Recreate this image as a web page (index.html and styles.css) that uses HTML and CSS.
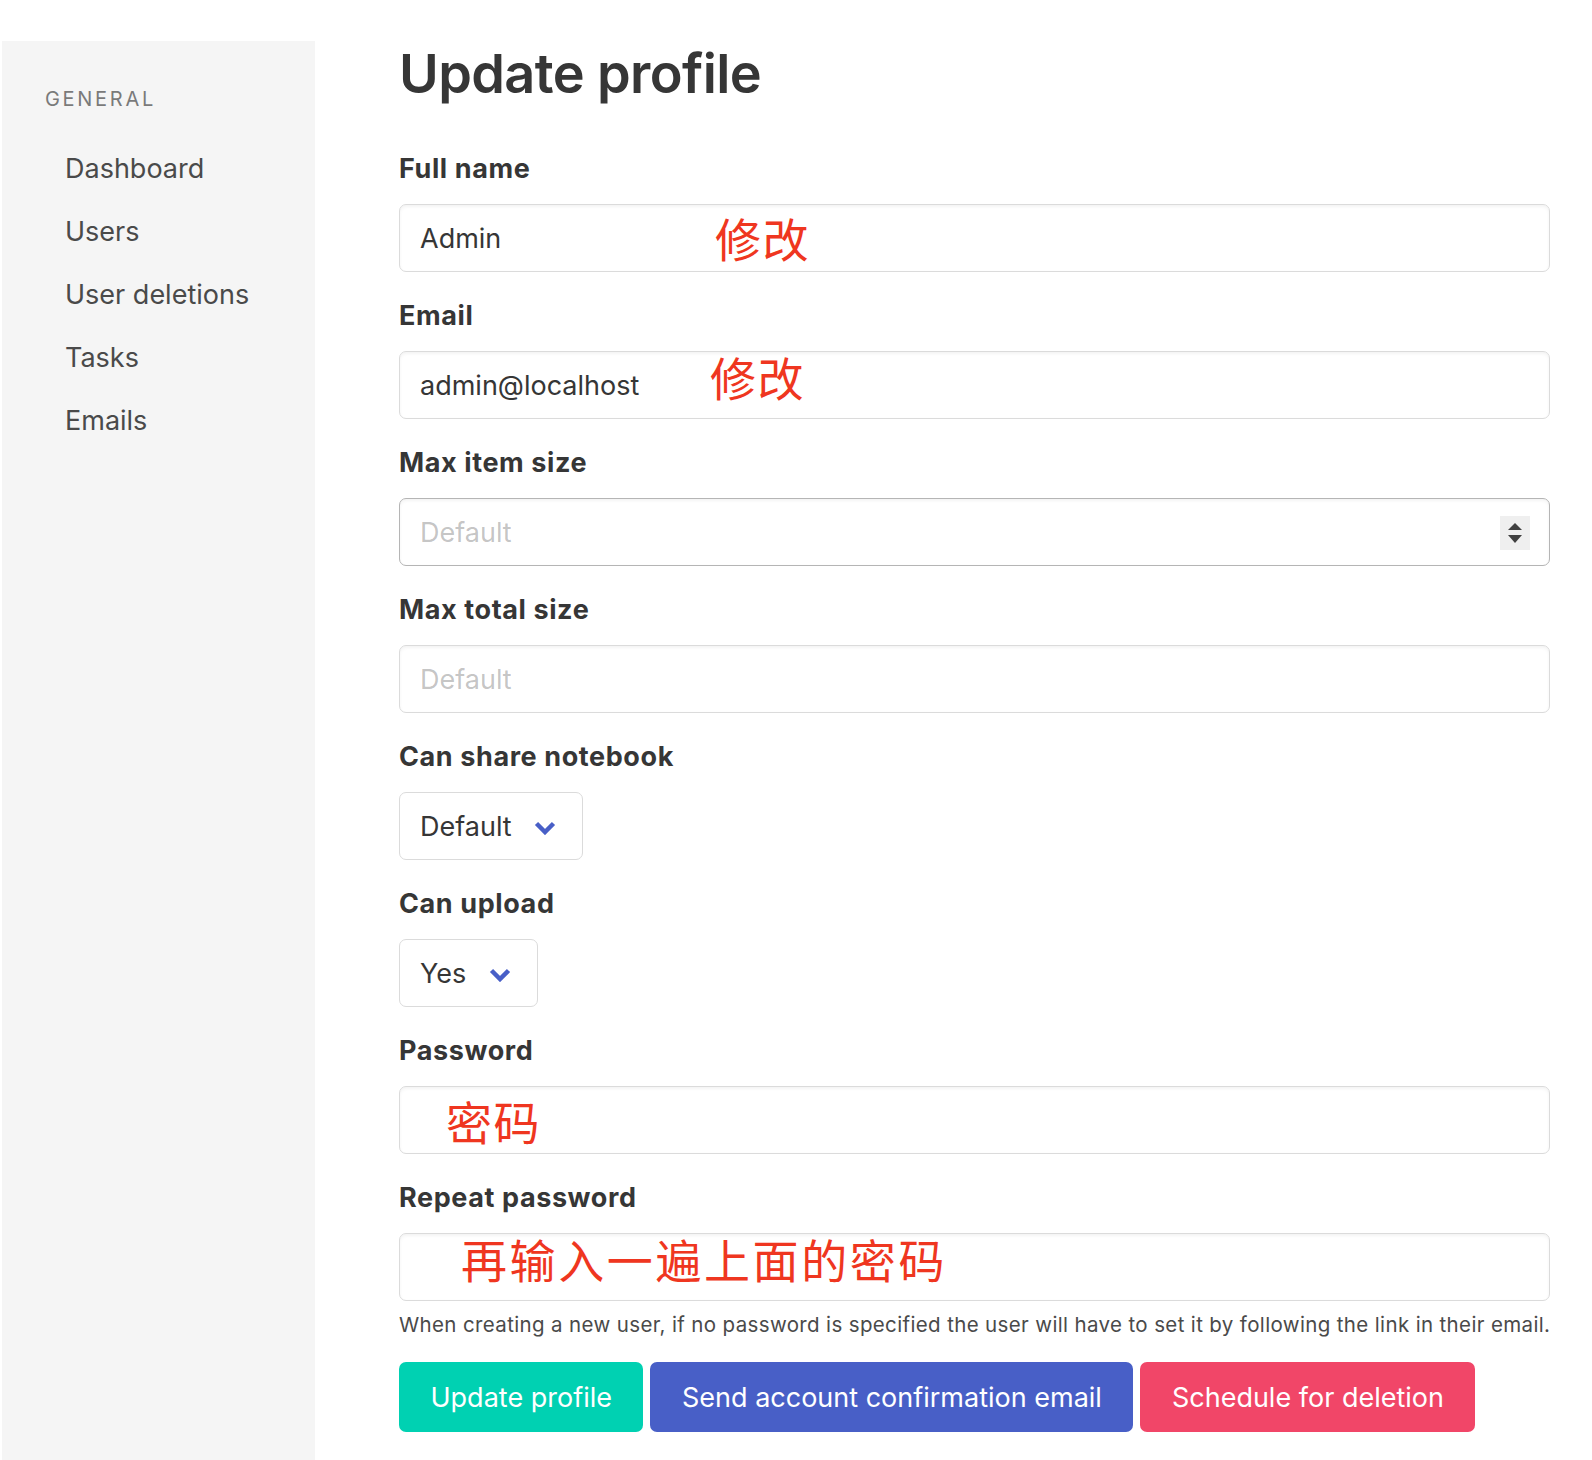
FILE: index.html
```html
<!DOCTYPE html>
<html lang="en">
<head>
<meta charset="utf-8">
<title>Update profile</title>
<link rel="stylesheet" href="styles.css">
</head>
<body>
<div class="page">
  <aside class="sidebar">
    <p class="menu-label">General</p>
    <ul class="menu-list">
      <li><a href="#">Dashboard</a></li>
      <li><a href="#">Users</a></li>
      <li><a href="#">User deletions</a></li>
      <li><a href="#">Tasks</a></li>
      <li><a href="#">Emails</a></li>
    </ul>
  </aside>
  <main class="content">
    <h1 class="title">Update profile</h1>
    <form class="form">
      <div class="field">
        <label class="label">Full name</label>
        <div class="control">
          <input class="input" type="text" value="Admin">
          <span class="note note-name">修改</span>
        </div>
      </div>
      <div class="field">
        <label class="label">Email</label>
        <div class="control">
          <input class="input" type="email" value="admin@localhost">
          <span class="note note-email">修改</span>
        </div>
      </div>
      <div class="field">
        <label class="label">Max item size</label>
        <div class="control">
          <input class="input input-hover" type="number" placeholder="Default">
          <span class="spinner"><span class="tri tri-up"></span><span class="tri tri-down"></span></span>
        </div>
      </div>
      <div class="field">
        <label class="label">Max total size</label>
        <div class="control">
          <input class="input" type="number" placeholder="Default">
        </div>
      </div>
      <div class="field">
        <label class="label">Can share notebook</label>
        <div class="control">
          <div class="select select-share">
            <select><option>Default</option></select>
            <svg class="chevron" width="22" height="14" viewBox="0 0 22 14"><polyline points="2.5,2.5 11,11 19.5,2.5" fill="none" stroke="#485fc7" stroke-width="4.5"/></svg>
          </div>
        </div>
      </div>
      <div class="field">
        <label class="label">Can upload</label>
        <div class="control">
          <div class="select select-upload">
            <select><option>Yes</option></select>
            <svg class="chevron" width="22" height="14" viewBox="0 0 22 14"><polyline points="2.5,2.5 11,11 19.5,2.5" fill="none" stroke="#485fc7" stroke-width="4.5"/></svg>
          </div>
        </div>
      </div>
      <div class="field">
        <label class="label">Password</label>
        <div class="control">
          <input class="input" type="password">
          <span class="note note-pass">密码</span>
        </div>
      </div>
      <div class="field field-last">
        <label class="label">Repeat password</label>
        <div class="control">
          <input class="input" type="password">
          <span class="note note-repeat">再输入一遍上面的密码</span>
        </div>
        <p class="help">When creating a new user, if no password is specified the user will have to set it by following the link in their email.</p>
      </div>
      <div class="buttons">
        <button type="button" class="button is-primary">Update profile</button>
        <button type="button" class="button is-link">Send account confirmation email</button>
        <button type="button" class="button is-danger">Schedule for deletion</button>
      </div>
    </form>
  </main>
</div>
</body>
</html>
```
FILE: styles.css
```css
html, body {
  margin: 0;
  padding: 0;
  background: #ffffff;
}
body {
  font-family: Inter, "Noto Sans", "Liberation Sans", sans-serif;
  color: #4a4a4a;
}
.page {
  display: flex;
  align-items: stretch;
  padding: 41px 0 0 2px;
  min-height: 1460px;
  box-sizing: border-box;
}
.sidebar {
  width: 313px;
  flex: 0 0 313px;
  background: #f5f5f5;
  padding: 43px 0 0 43px;
  box-sizing: border-box;
}
.menu-label {
  margin: 0 0 23px 0;
  font-size: 20px;
  line-height: 30px;
  letter-spacing: 2.7px;
  text-transform: uppercase;
  color: #7a7a7a;
}
.menu-list {
  list-style: none;
  margin: 0;
  padding: 0;
}
.menu-list a {
  display: block;
  padding: 15px 20px;
  font-size: 27px;
  line-height: 33px;
  color: #4a4a4a;
  text-decoration: none;
}
.content {
  flex: 1;
  padding: 3px 43px 0 84px;
  box-sizing: border-box;
}
.title {
  margin: 0 0 44.5px 0;
  font-size: 54px;
  line-height: 60px;
  font-weight: 600;
  letter-spacing: -0.6px;
  color: #363636;
}
.form {
  margin: 0;
}
.field {
  margin-bottom: 23.5px;
}
.label {
  display: block;
  margin-bottom: 15.5px;
  font-size: 27px;
  line-height: 40px;
  font-weight: 700;
  letter-spacing: 0.6px;
  color: #363636;
}
.control {
  position: relative;
}
.input {
  display: block;
  width: 100%;
  height: 68px;
  box-sizing: border-box;
  margin: 0;
  padding: 0 20px;
  border: 1px solid #dbdbdb;
  border-radius: 7px;
  box-shadow: inset 0 1.7px 3.4px rgba(10, 10, 10, 0.05);
  background: #ffffff;
  font-family: inherit;
  font-size: 27px;
  color: #363636;
  outline: none;
  -moz-appearance: textfield;
}
.input::placeholder {
  color: rgba(54, 54, 54, 0.3);
}
.input::-webkit-inner-spin-button,
.input::-webkit-outer-spin-button {
  -webkit-appearance: none;
  margin: 0;
}
.input-hover {
  border-color: #b5b5b5;
}
.note {
  position: absolute;
  font-family: "Noto Sans CJK SC", sans-serif;
  font-size: 46px;
  line-height: 46px;
  color: #ef3620;
  letter-spacing: 1.5px;
  white-space: nowrap;
  pointer-events: none;
}
.note-name { left: 316px; top: 9.5px; }
.note-email { left: 311px; top: 1.5px; }
.note-pass { left: 47px; top: 11px; }
.note-repeat { left: 62px; top: 2px; letter-spacing: 2.6px; }
.spinner {
  position: absolute;
  right: 20px;
  top: 17.5px;
  width: 30px;
  height: 34px;
  background: #efefef;
}
.tri {
  position: absolute;
  left: 7.5px;
  width: 0;
  height: 0;
  border-left: 7.5px solid transparent;
  border-right: 7.5px solid transparent;
}
.tri-up {
  top: 7px;
  border-bottom: 7px solid #404040;
}
.tri-down {
  top: 19px;
  border-top: 8px solid #404040;
}
.select {
  position: relative;
  display: inline-block;
}
.select select {
  -webkit-appearance: none;
  appearance: none;
  height: 68px;
  box-sizing: border-box;
  margin: 0;
  padding: 0 70px 0 20px;
  border: 1px solid #dbdbdb;
  border-radius: 7px;
  background: #ffffff;
  font-family: inherit;
  font-size: 27px;
  color: #363636;
  outline: none;
}
.chevron {
  position: absolute;
  right: 27px;
  top: 29px;
  pointer-events: none;
}
.field-last {
  margin-bottom: 22px;
}
.help {
  margin: 9px 0 0 0;
  font-size: 20.5px;
  line-height: 30px;
  letter-spacing: 0.36px;
  white-space: nowrap;
  color: #4a4a4a;
}
.buttons {
  display: flex;
  gap: 7px;
}
.button {
  height: 70px;
  margin: 0;
  padding: 0 30.5px;
  border: 1px solid transparent;
  border-radius: 7px;
  font-family: inherit;
  font-size: 27px;
  color: #ffffff;
  cursor: pointer;
}
.is-primary { background: #00d1b2; }
.is-link { background: #485fc7; }
.is-danger { background: #f14668; }
```
